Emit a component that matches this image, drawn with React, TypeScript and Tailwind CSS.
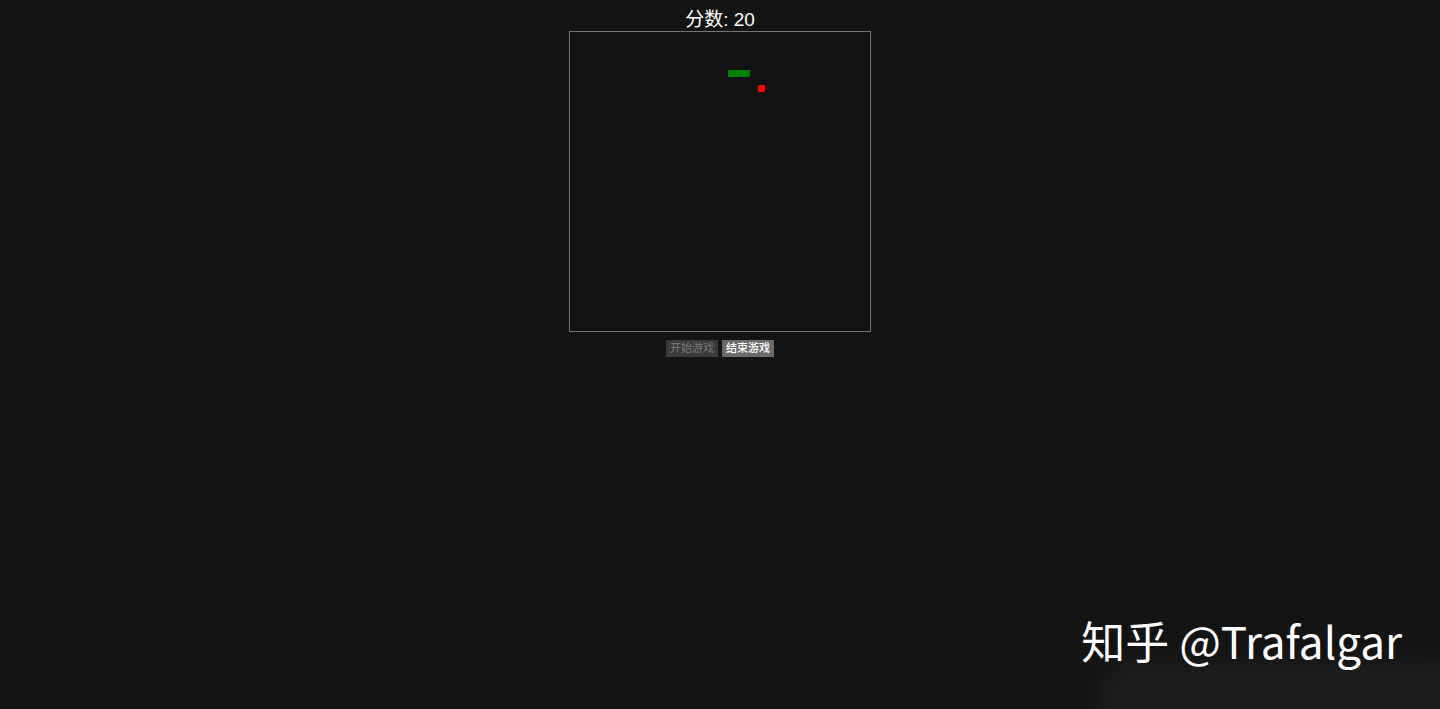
// Snake game screen — score, board, controls
const CELL = 7.5;

const snake = [
  { x: 21, y: 5 },
  { x: 22, y: 5 },
  { x: 23, y: 5 },
];
const food = { x: 25, y: 7 };

export default function App() {
  return (
    <div
      className="relative min-h-[709px] w-full overflow-hidden bg-[#141414] text-white"
      style={{ fontFamily: '"Liberation Sans", Arial, "Noto Sans CJK SC", sans-serif' }}
    >
      <div className="flex flex-col items-center">
        <h1 className="h-[31px] pt-[9px] text-[19px] leading-[22px] font-normal">分数: 20</h1>

        {/* board */}
        <div className="relative h-[301px] w-[302px] border border-[#767676] bg-[#121212]">
          {snake.map((s, i) => (
            <div
              key={i}
              className="absolute bg-[#008000]"
              style={{ left: s.x * CELL, top: s.y * CELL, width: CELL, height: CELL }}
            />
          ))}
          <div
            className="absolute bg-[#ff0000]"
            style={{ left: food.x * CELL, top: food.y * CELL, width: CELL, height: CELL }}
          />
        </div>

        <div className="mt-[8px] flex gap-[4px]">
          <button
            disabled
            className="h-[17px] w-[52px] bg-[#3b3b3b] text-[11px] leading-[17px] text-[#7a7a7a]"
          >
            开始游戏
          </button>
          <button className="h-[17px] w-[52px] bg-[#6b6b6b] text-[11px] leading-[17px] font-medium text-white">
            结束游戏
          </button>
        </div>
      </div>

      {/* watermark */}
      <div className="absolute right-[-30px] bottom-[-25px] h-[75px] w-[370px] rounded-[35px] bg-[#1c1c1c] blur-[8px]" />
      <div
        className="absolute right-[38px] top-[611px] text-[44px] leading-[58px] font-normal text-white"
        style={{ fontFamily: '"Noto Sans CJK SC", "Noto Sans", sans-serif' }}
      >
        知乎 @Trafalgar
      </div>
    </div>
  );
}
